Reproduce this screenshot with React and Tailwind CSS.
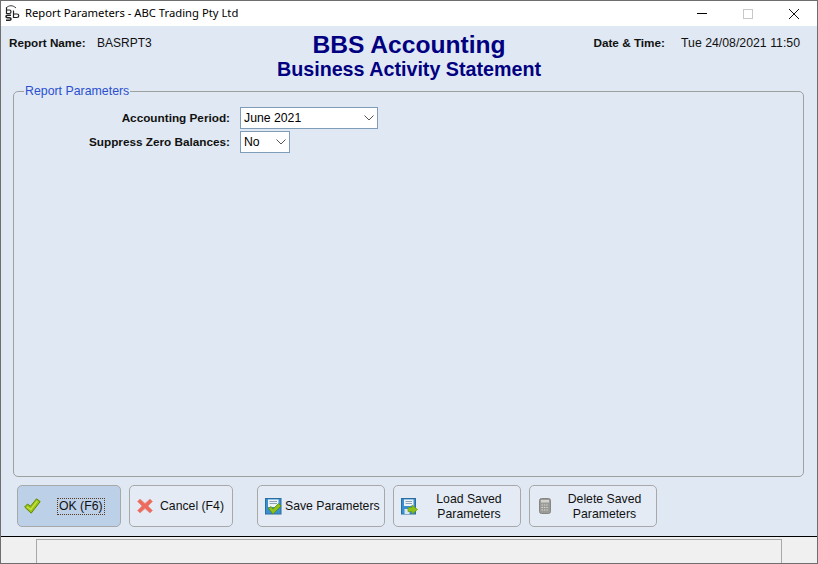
import React from 'react';

const FONT = "font-['Liberation_Sans',Arial,sans-serif]";

function AppLogo() {
  return (
    <svg width="16" height="17" viewBox="0 0 16 17" fill="none" stroke="#222" strokeWidth="1.2">
      <path d="M1 3 C4 0 8 0 11 3" strokeWidth="0.9" />
      <path d="M1.5 2.5 V8.5 H4.5 Q6 8.5 6 6.8 Q6 5 4.5 5 H1.5" />
      <path d="M8.5 5.5 V12.5 H12 Q13.8 12.5 13.8 10.8 Q13.8 9 12 9 H8.5" />
      <path d="M6 10.2 H2.5 Q1 10.2 1 11.6 Q1 12.8 2.5 12.8 H4.5 Q6 12.8 6 14 Q6 15.3 4.5 15.3 H1" strokeWidth="1.5" />
    </svg>
  );
}

function CheckIcon() {
  return (
    <svg width="17" height="16" viewBox="0 0 17 16">
      <path d="M0.6 9 L3.5 6 L6.5 8.2 L12.5 0.8 L16.2 3.6 L7.2 15.2 Z" fill="#9ac20e" stroke="#5f8a05" strokeWidth="1" strokeLinejoin="round" />
      <path d="M3 8.8 L6.8 11.5 L13.2 3.2" fill="none" stroke="#c8e350" strokeWidth="1.3" />
    </svg>
  );
}

function CrossIcon() {
  return (
    <svg width="16" height="16" viewBox="0 0 16 16">
      <path d="M3 1 L8 5.5 L13 1 L15.5 3.5 L11 8 L15.5 12.5 L13 15 L8 10.5 L3 15 L0.5 12.5 L5 8 L0.5 3.5 Z" fill="#ee6a5c" stroke="#e0968c" strokeWidth="0.8" strokeLinejoin="round" />
    </svg>
  );
}

function SaveIcon() {
  return (
    <svg width="17" height="17" viewBox="0 0 17 17">
      <rect x="0.5" y="0.5" width="15.5" height="15.5" fill="#3a8fd0" stroke="#2b6d9e" />
      <rect x="3" y="1.5" width="10.5" height="7.5" fill="#eef3f8" />
      <path d="M4.5 3.5 H12 M4.5 5.5 H12" stroke="#8ba3b8" strokeWidth="1" />
      <path d="M3.5 10.5 L6 8.5 L8 11 L13.5 5.5 L16 8 L8 16 Z" fill="#8cc21a" stroke="#5f8a05" strokeWidth="0.8" />
    </svg>
  );
}

function LoadIcon() {
  return (
    <svg width="17" height="17" viewBox="0 0 17 17">
      <rect x="0.5" y="0.5" width="14" height="15.5" fill="#3a8fd0" stroke="#2b6d9e" />
      <rect x="3" y="1.5" width="9.5" height="6.5" fill="#eef3f8" />
      <path d="M4.5 3.5 H11 M4.5 5.5 H11" stroke="#8ba3b8" strokeWidth="1" />
      <rect x="3.5" y="11" width="5" height="5" fill="#dce6ee" />
      <path d="M7 9.5 H11 V7 L16.5 11.5 L11 16 V13.5 H7 Z" fill="#8cc21a" stroke="#6a9a0c" strokeWidth="0.7" />
    </svg>
  );
}

function DeleteIcon() {
  return (
    <svg width="12" height="16" viewBox="0 0 12 16">
      <rect x="0.5" y="0.5" width="11" height="15" rx="2" fill="#9a9a97" stroke="#858582" />
      <rect x="2" y="2" width="8" height="2.5" fill="#d2d2cf" />
      <path d="M2.5 7 H9.5 M2.5 9.5 H9.5 M2.5 12 H9.5" stroke="#d8d8d4" strokeWidth="1" strokeDasharray="1.4 1" />
    </svg>
  );
}

function ActionButton({ icon, width, active, iconPad = 'pl-[7px]', children }) {
  return (
    <button className={`h-[42px] ${width} flex items-center ${iconPad} rounded-[5px] border border-[#a8a8a8] text-[12.25px] leading-[15px] text-[#111] ${active ? 'bg-[#bcd0e8]' : 'bg-[#e4ebf5]'}`}>
      <span className="shrink-0 flex items-center">{icon}</span>
      {children}
    </button>
  );
}

function Select({ value, width }) {
  return (
    <div className={`h-[22px] ${width} flex items-center justify-between bg-white border border-[#7f9db9] pl-[3px] pr-[3px] text-[12.25px] text-black`}>
      <span>{value}</span>
      <svg width="10" height="6" viewBox="0 0 10 6" fill="none" stroke="#555" strokeWidth="1">
        <path d="M0.5 0.5 L5 5 L9.5 0.5" />
      </svg>
    </div>
  );
}

export default function App() {
  return (
    <div className={`${FONT} w-[818px] h-[564px] flex flex-col overflow-hidden bg-[#e0e8f3] border border-[#6e6e6e]`}>
      <div className="h-[25px] shrink-0 bg-white flex items-center text-black">
        <div className="pl-[4px] w-[24px] shrink-0 flex items-center"><AppLogo /></div>
        <span className="font-['Noto_Sans',sans-serif] text-[11.25px]">Report Parameters - ABC Trading Pty Ltd</span>
        <div className="ml-auto flex items-center h-full">
          <div className="w-[46px] flex justify-center"><div className="w-[10px] h-px bg-black" /></div>
          <div className="w-[46px] flex justify-center"><div className="w-[10px] h-[10px] border border-[#c8c8c8]" /></div>
          <div className="w-[46px] flex justify-center">
            <svg width="12" height="12" viewBox="0 0 12 12" stroke="#111" strokeWidth="1"><path d="M1 1 L11 11 M11 1 L1 11" /></svg>
          </div>
        </div>
      </div>

      <div className="h-[60px] shrink-0 flex">
        <div className="w-[250px] shrink-0 flex items-baseline pt-[9px] pl-[8px] leading-[15px] text-[#111]">
          <span className="font-bold text-[11.7px] w-[88px]">Report Name:</span>
          <span className="text-[12px]">BASRPT3</span>
        </div>
        <div className="flex-1 flex flex-col items-center pt-[4px] text-[#000080] font-bold">
          <div className="text-[24.6px] leading-[29px]">BBS Accounting</div>
          <div className="text-[19.7px] leading-[23px] -mt-[1px]">Business Activity Statement</div>
        </div>
        <div className="w-[250px] shrink-0 flex items-baseline justify-end pt-[9px] pr-[17px] leading-[15px] text-[#111]">
          <span className="font-bold text-[11.75px] mr-[16px]">Date &amp; Time:</span>
          <span className="text-[12.3px]">Tue 24/08/2021 11:50</span>
        </div>
      </div>

      <fieldset className="ml-[12px] mr-[13px] h-[393px] shrink-0 border border-[#a0a0a0] rounded-[5px] pl-[10px] -mt-[2px]">
        <legend className="text-[12.35px] leading-[14px] text-[#2a50d0] px-[1px]">Report Parameters</legend>
        <div className="ml-[-10px] pt-[9px] flex flex-col gap-[2px] text-[#111]">
          <div className="flex items-center">
            <label className="w-[216px] text-right font-bold text-[11.75px]">Accounting Period:</label>
            <div className="ml-[10px]"><Select value="June 2021" width="w-[138px]" /></div>
          </div>
          <div className="flex items-center">
            <label className="w-[216px] text-right font-bold text-[11.75px]">Suppress Zero Balances:</label>
            <div className="ml-[10px]"><Select value="No" width="w-[50px]" /></div>
          </div>
        </div>
      </fieldset>

      <div className="h-[59px] shrink-0 flex items-start pt-[8px] pl-[16px]">
        <ActionButton icon={<CheckIcon />} width="w-[104px]" active iconPad="pl-[6px]">
          <span className="ml-[16px] px-[1px] border border-dotted border-[#5a3a20]">OK (F6)</span>
        </ActionButton>
        <div className="ml-[8px]">
          <ActionButton icon={<CrossIcon />} width="w-[104px]">
            <span className="ml-[7px]">Cancel (F4)</span>
          </ActionButton>
        </div>
        <div className="ml-[24px]">
          <ActionButton icon={<SaveIcon />} width="w-[128px]">
            <span className="ml-[3px] whitespace-nowrap">Save Parameters</span>
          </ActionButton>
        </div>
        <div className="ml-[8px]">
          <ActionButton icon={<LoadIcon />} width="w-[128px]">
            <span className="flex-1 text-center pl-[2px] pr-[2px] pt-[1px]">Load Saved<br />Parameters</span>
          </ActionButton>
        </div>
        <div className="ml-[8px]">
          <ActionButton icon={<DeleteIcon />} width="w-[128px]" iconPad="pl-[9px]">
            <span className="flex-1 text-center pl-[2px] pt-[1px]">Delete Saved<br />Parameters</span>
          </ActionButton>
        </div>
      </div>

      <div className="flex-1 bg-[#f0f0f0] border-t border-black flex pt-[2px]">
        <div className="ml-[35px] w-[746px] border-t border-l border-r border-[#a8a8a8]" />
      </div>
    </div>
  );
}
